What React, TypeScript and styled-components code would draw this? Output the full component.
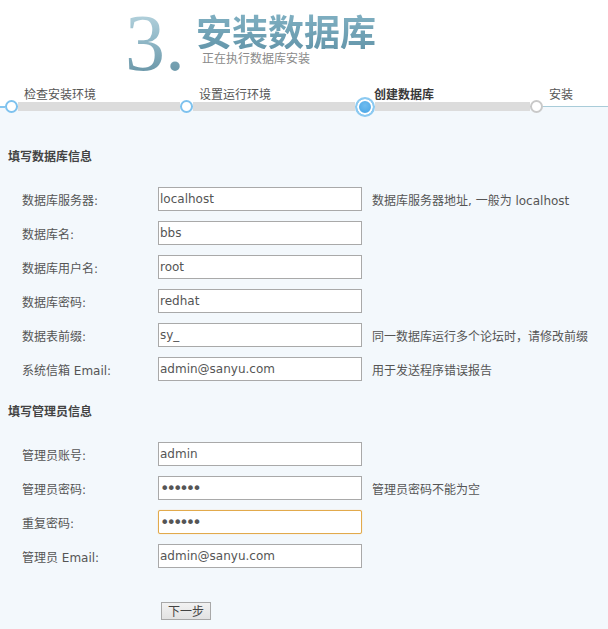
import React from "react";
import styled, { createGlobalStyle } from "styled-components";

const GlobalStyle = createGlobalStyle`
  html, body {
    margin: 0;
    padding: 0;
    background: #f3f8fc;
  }
  body {
    font-family: "DejaVu Sans", "Noto Sans CJK SC", sans-serif;
    font-size: 12px;
    color: #555;
  }
`;

const Page = styled.div`
  width: 608px;
  min-height: 629px;
  display: flex;
  flex-direction: column;
`;

const Header = styled.header`
  background: #fff;
  height: 88px;
  display: flex;
  align-items: flex-start;
  padding-left: 125px;
  box-sizing: border-box;
`;

const StepNumber = styled.div`
  font-family: "Liberation Serif", serif;
  font-size: 80px;
  line-height: 80px;
  margin-top: 3px;
  background: linear-gradient(to bottom, #c2dce5 0%, #92b9c8 45%, #5f8d9f 100%);
  -webkit-background-clip: text;
  background-clip: text;
  color: transparent;
`;

const TitleBlock = styled.div`
  display: flex;
  flex-direction: column;
  margin-left: 11px;
  margin-top: 13px;
`;

const Title = styled.h1`
  margin: 0;
  font-family: "Noto Sans CJK SC", sans-serif;
  font-size: 36px;
  line-height: 34px;
  height: 36px;
  font-weight: bold;
  background: linear-gradient(to bottom, #80b0c2 0%, #6597ab 100%);
  -webkit-background-clip: text;
  background-clip: text;
  color: transparent;
`;

const Subtitle = styled.div`
  margin-top: 3px;
  padding-left: 6px;
  font-size: 12px;
  line-height: 14px;
  color: #8a8a8a;
`;

const StepBar = styled.div`
  display: flex;
  align-items: flex-end;
  height: 23px;
  background: linear-gradient(
    to bottom,
    #fff 0,
    #fff 18px,
    #a9ccd9 18px,
    #a9ccd9 19px,
    #f3f8fc 19px
  );
`;

const Lead = styled.div`
  width: 5px;
  height: 9px;
  display: flex;
  align-items: center;
  &::before {
    content: "";
    display: block;
    width: 5px;
    height: 2px;
    background: #86c6ef;
  }
`;

const Step = styled.div<{ $last?: boolean }>`
  display: flex;
  flex-direction: column;
  width: ${(p) => (p.$last ? "auto" : "175px")};
  flex: ${(p) => (p.$last ? "1" : "none")};
`;

const StepLabel = styled.div<{ $active?: boolean }>`
  height: 14px;
  line-height: 14px;
  padding-left: 19px;
  font-size: 12px;
  white-space: nowrap;
  color: ${(p) => (p.$active ? "#3a3a3a" : "#555")};
  font-weight: ${(p) => (p.$active ? "bold" : "normal")};
`;

const Track = styled.div`
  height: 9px;
  display: flex;
  align-items: center;
`;

const Band = styled.div<{ $thin?: boolean }>`
  flex: 1;
  height: ${(p) => (p.$thin ? "0" : "9px")};
  background: #dcdcdc;
`;

const Dot = styled.div<{ $state: "done" | "active" | "todo" }>`
  position: relative;
  z-index: 1;
  flex: none;
  box-sizing: border-box;
  border-radius: 50%;
  width: ${(p) => (p.$state === "active" ? "20px" : "13px")};
  height: ${(p) => (p.$state === "active" ? "20px" : "13px")};
  border: 2px solid
    ${(p) => (p.$state === "todo" ? "#c9c9c9" : p.$state === "active" ? "#8ccaf1" : "#7ec2ee")};
  background: ${(p) =>
    p.$state === "active"
      ? "radial-gradient(circle at 50% 40%, #6fbcef 0%, #4aa6e6 70%)"
      : "#fff"};
  box-shadow: ${(p) => (p.$state === "active" ? "inset 0 0 0 2px #fff" : "none")};
`;

const Panel = styled.main`
  flex: 1;
  background: #f3f8fc;
  padding: 39px 0 0 8px;
`;

const SectionTitle = styled.h2`
  margin: 0 0 18px 0;
  font-size: 12px;
  line-height: 14px;
  font-weight: bold;
  color: #444;
`;

const Form = styled.div`
  display: flex;
  flex-direction: column;
`;

const FieldRow = styled.div`
  display: grid;
  grid-template-columns: 136px 204px auto;
  column-gap: 0;
  align-items: center;
  height: 34px;
  padding-left: 14px;
`;

const Label = styled.label`
  font-size: 12px;
  color: #555;
  white-space: nowrap;
`;

const Input = styled.input<{ $focus?: boolean; $secret?: boolean }>`
  box-sizing: border-box;
  width: 204px;
  height: 24px;
  margin: 0;
  padding: 0 1px;
  font-family: "DejaVu Sans", "Noto Sans CJK SC", sans-serif;
  font-size: ${(p) => (p.$secret ? "16px" : "12px")};
  letter-spacing: ${(p) => (p.$secret ? "-3px" : "normal")};
  color: #555;
  background: #fff;
  border: 1px solid ${(p) => (p.$focus ? "#e2aa4c" : "#a9a9a9")};
  border-radius: ${(p) => (p.$focus ? "2px" : "0")};
  box-shadow: ${(p) => (p.$focus ? "0 0 1px 0 #f0c47a" : "none")};
  outline: none;
`;

const Note = styled.span`
  padding-left: 10px;
  font-size: 12px;
  color: #555;
  white-space: nowrap;
`;

const Section = styled.section`
  & + & {
    margin-top: 19px;
  }
`;

const Actions = styled.div`
  padding: 29px 0 0 153px;
`;

const NextButton = styled.button`
  box-sizing: border-box;
  width: 50px;
  height: 18px;
  padding: 0;
  margin: 0;
  font-family: "Noto Sans CJK SC", sans-serif;
  font-size: 12px;
  line-height: 16px;
  color: #444;
  background: linear-gradient(to bottom, #f2f2f2, #e2e2e2);
  border: 1px solid #a8a8a8;
  border-radius: 0;
`;

type Field = {
  label: string;
  value: string;
  type?: string;
  note?: string;
  focus?: boolean;
};

const dbFields: Field[] = [
  { label: "数据库服务器:", value: "localhost", note: "数据库服务器地址, 一般为 localhost" },
  { label: "数据库名:", value: "bbs" },
  { label: "数据库用户名:", value: "root" },
  { label: "数据库密码:", value: "redhat" },
  { label: "数据表前缀:", value: "sy_", note: "同一数据库运行多个论坛时，请修改前缀" },
  { label: "系统信箱 Email:", value: "admin@sanyu.com", note: "用于发送程序错误报告" },
];

const adminFields: Field[] = [
  { label: "管理员账号:", value: "admin" },
  { label: "管理员密码:", value: "redhat", type: "password", note: "管理员密码不能为空" },
  { label: "重复密码:", value: "redhat", type: "password", focus: true },
  { label: "管理员 Email:", value: "admin@sanyu.com" },
];

const steps = [
  { label: "检查安装环境", state: "done" as const },
  { label: "设置运行环境", state: "done" as const },
  { label: "创建数据库", state: "active" as const },
  { label: "安装", state: "todo" as const },
];

function Fields({ items }: { items: Field[] }) {
  return (
    <Form>
      {items.map((f) => (
        <FieldRow key={f.label}>
          <Label>{f.label}</Label>
          <Input
            type={f.type ?? "text"}
            defaultValue={f.value}
            $focus={f.focus}
            $secret={f.type === "password"}
            readOnly
          />
          <Note>{f.note ?? ""}</Note>
        </FieldRow>
      ))}
    </Form>
  );
}

export default function App() {
  return (
    <Page>
      <GlobalStyle />
      <Header>
        <StepNumber>3.</StepNumber>
        <TitleBlock>
          <Title>安装数据库</Title>
          <Subtitle>正在执行数据库安装</Subtitle>
        </TitleBlock>
      </Header>
      <StepBar>
        <Lead />
        {steps.map((s, i) => {
          const last = i === steps.length - 1;
          return (
            <Step key={s.label} $last={last}>
              <StepLabel $active={s.state === "active"}>{s.label}</StepLabel>
              <Track>
                <Dot $state={s.state} />
                <Band $thin={last} />
              </Track>
            </Step>
          );
        })}
      </StepBar>
      <Panel>
        <Section>
          <SectionTitle>填写数据库信息</SectionTitle>
          <Fields items={dbFields} />
        </Section>
        <Section>
          <SectionTitle>填写管理员信息</SectionTitle>
          <Fields items={adminFields} />
        </Section>
        <Actions>
          <NextButton type="button">下一步</NextButton>
        </Actions>
      </Panel>
    </Page>
  );
}
